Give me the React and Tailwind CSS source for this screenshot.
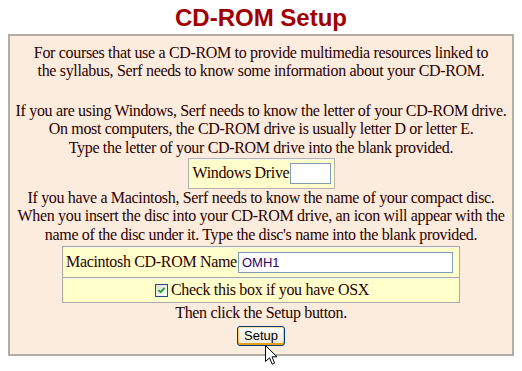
import React from 'react'

function XpCheckbox() {
  return (
    <span className="inline-block h-[13px] w-[13px] shrink-0 border border-[#1c5180] bg-linear-to-br from-[#dcdcd7] to-white">
      <svg viewBox="0 0 11 11" width="11" height="11" className="block">
        <path d="M2.5 5 L4.5 7.2 L8.6 3" fill="none" stroke="#21a121" strokeWidth="1.8" />
      </svg>
    </span>
  )
}

function Cursor() {
  return (
    <svg className="pointer-events-none absolute left-[265px] top-[345px]" width="13" height="21" viewBox="0 0 13 21">
      <path d="M0.5 0.5 L0.5 16.5 L4.5 12.8 L7.2 19.2 L9.6 18.2 L7 11.8 L12 11.8 Z" fill="white" stroke="black" strokeWidth="1" strokeLinejoin="miter" />
    </svg>
  )
}

export default function App() {
  return (
    <div className="relative min-h-[371px] w-[522px] bg-white">
      <h1 className="mb-[2px] pt-[4px] text-center font-['Liberation_Sans'] text-[24px] font-bold leading-[28px] text-[#a00000]">
        CD-ROM Setup
      </h1>

      <div className="mx-2 whitespace-nowrap border-2 border-[#b2aea6] bg-[#fbecde] pb-[8px] pt-[8px] text-center font-['Liberation_Serif'] text-[16px] leading-[18.4px] tracking-[-0.33px] text-[#2b0000]">
        <p>
          For courses that use a CD-ROM to provide multimedia resources linked to
          <br />
          the syllabus, Serf needs to know some information about your CD-ROM.
        </p>

        <p className="mt-[21px]">
          If you are using Windows, Serf needs to know the letter of your CD-ROM drive.
          <br />
          On most computers, the CD-ROM drive is usually letter D or letter E.
          <br />
          Type the letter of your CD-ROM drive into the blank provided.
        </p>

        <div className="mx-auto mt-[1px] flex h-[31px] w-[147px] items-center border border-[#b4b4b4] bg-[#ffffcc] pl-[4px] shadow-[inset_1px_1px_0_#f4f4f0]">
          <span>Windows Drive</span>
          <input
            type="text"
            defaultValue=""
            className="ml-px h-[21px] w-[41px] border border-[#7f9db9] bg-white px-[2px] font-['Liberation_Sans'] text-[13px] tracking-normal outline-none"
          />
        </div>

        <p>
          If you have a Macintosh, Serf needs to know the name of your compact disc.
          <br />
          When you insert the disc into your CD-ROM drive, an icon will appear with the
          <br />
          name of the disc under it. Type the disc's name into the blank provided.
        </p>

        <div className="mx-auto mt-[2px] w-[398px] border border-[#aaaaaa] bg-[#ffffcc] shadow-[inset_1px_1px_0_#f4f4f0]">
          <div className="flex h-[30px] items-center pl-[3px]">
            <span className="w-[172px] text-left">Macintosh CD-ROM Name</span>
            <input
              type="text"
              defaultValue="OMH1"
              className="h-[21px] w-[215px] border border-[#7f9db9] bg-white px-[3px] font-['Liberation_Sans'] text-[13px] tracking-normal text-[#330066] outline-none"
            />
          </div>
          <div className="flex h-[25px] items-center justify-center gap-[3px] border-t border-[#aaaaaa] pl-[2px] shadow-[inset_0_1px_0_#f4f4f0]">
            <XpCheckbox />
            <span>Check this box if you have OSX</span>
          </div>
        </div>

        <p className="mt-[1px]">Then click the Setup button.</p>

        <button
          type="button"
          className="mx-auto mt-[3px] block h-[20px] w-[48px] rounded-[3px] border border-[#003c74] bg-linear-to-b from-white to-[#ece9d8] font-['Liberation_Sans'] text-[13px] leading-none tracking-normal text-black shadow-[inset_0_1px_0_#ffe0a0,inset_0_-2px_0_#e5a01a,inset_1px_0_0_#fbc45c,inset_-1px_0_0_#fbc45c]"
        >
          Setup
        </button>
      </div>

      <Cursor />
    </div>
  )
}
